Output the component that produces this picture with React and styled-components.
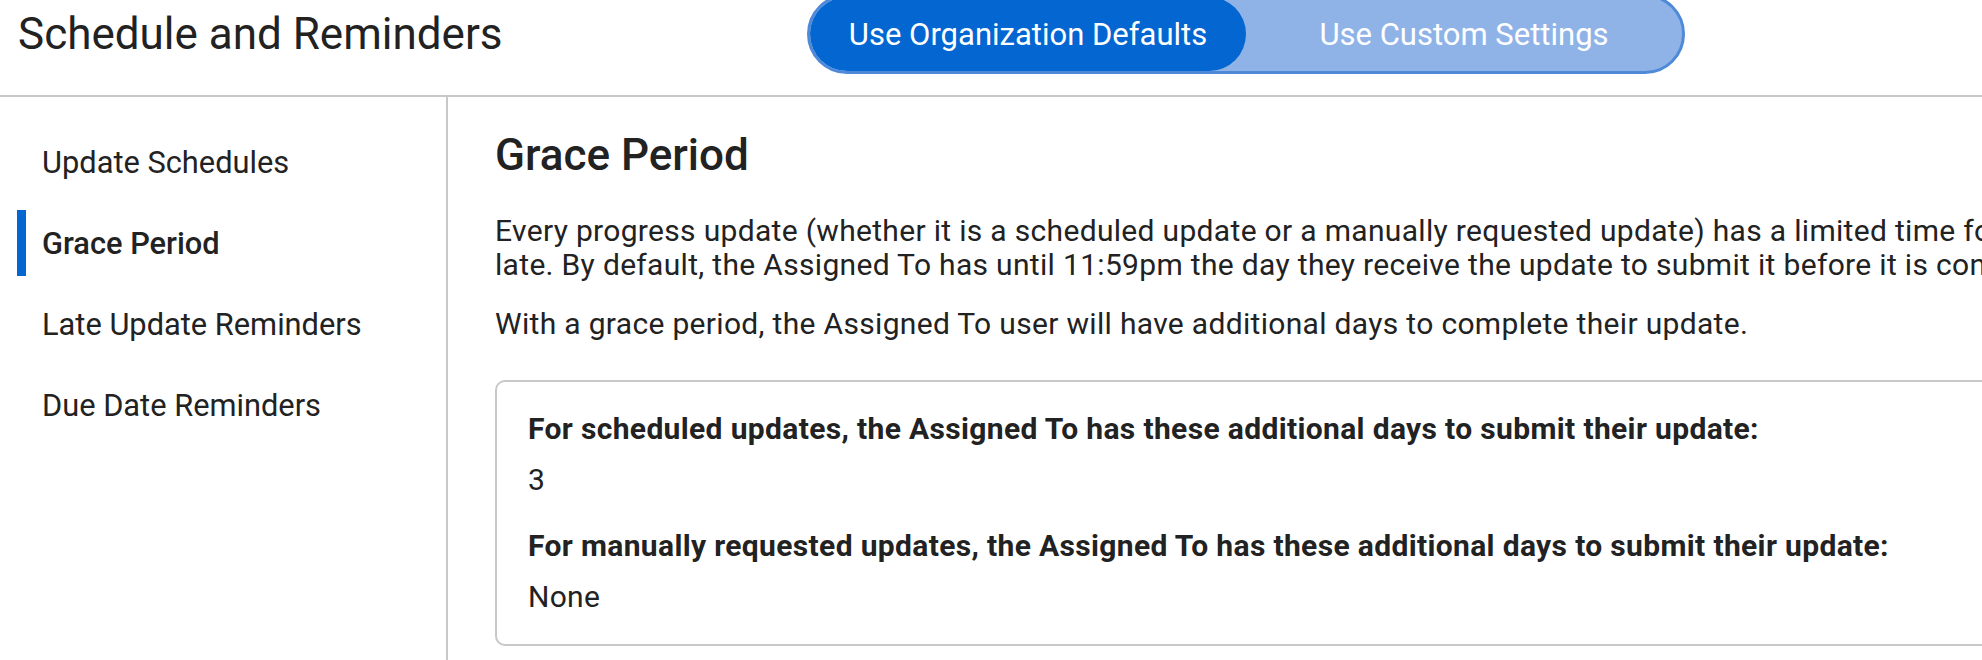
import React from "react";
import styled, {createGlobalStyle} from "styled-components";

const GlobalStyle = createGlobalStyle`
  html, body {
    margin: 0;
    padding: 0;
    background: #fff;
    overflow: hidden;
  }
  body {
    font-family: Roboto, "Liberation Sans", sans-serif;
    color: #222;
  }
`;

const Header = styled.header`
  display: flex;
  align-items: center;
  height: 64px;
  padding: 2px 0 29px 18px;
  border-bottom: 2px solid #c8c8c8;
`;

const PageTitle = styled.h1`
  flex: 0 0 789px;
  margin: 0;
  font-size: 44px;
  font-weight: 400;
  color: #222;
  white-space: nowrap;
`;

const Toggle = styled.div`
  display: flex;
  flex: 0 0 872px;
  height: 74px;
  border: 3px solid #4f8ad9;
  border-radius: 40px;
  background: #8fb3e7;
  overflow: hidden;
`;

const ToggleOption = styled.button`
  flex: 1;
  border: none;
  border-radius: 40px;
  padding: 0;
  font-family: inherit;
  font-size: 31px;
  color: #fff;
  cursor: pointer;
  background: ${props => props.active ? "#0366d1" : "transparent"};
`;

const Body = styled.div`
  display: flex;
  align-items: stretch;
  height: 564px;
`;

const Sidebar = styled.nav`
  flex: 0 0 446px;
  border-right: 2px solid #c8c8c8;
  padding-top: 32px;
`;

const NavItem = styled.div`
  display: flex;
  align-items: center;
  height: 66px;
  margin: 0 0 15px 17px;
  padding-left: 16px;
  border-left: 9px solid ${props => props.active ? "#0366d1" : "transparent"};
  font-size: 30.8px;
  font-weight: ${props => props.active ? 500 : 400};
  color: #222;
`;

const Main = styled.main`
  flex: 0 0 2150px;
  padding: 32px 0 0 47px;
`;

const SectionTitle = styled.h2`
  margin: 0 0 33px;
  font-size: 44px;
  font-weight: 500;
  color: #222;
`;

const Paragraph = styled.p`
  margin: 0 0 25px;
  font-size: 30px;
  line-height: 34px;
  letter-spacing: 0.32px;
`;

const Card = styled.div`
  margin-top: 39px;
  padding: 30px 31px 30px;
  border: 2px solid #c8c8c8;
  border-radius: 10px;
  display: flex;
  flex-direction: column;
  gap: 32px;
`;

const Field = styled.div`
  display: flex;
  flex-direction: column;
  gap: 17px;
`;

const FieldLabel = styled.div`
  font-size: 30px;
  line-height: 34px;
  font-weight: 700;
  letter-spacing: 0.35px;
`;

const FieldValue = styled.div`
  font-size: 30px;
  line-height: 34px;
  letter-spacing: 0.3px;
`;

const navItems = ["Update Schedules", "Grace Period", "Late Update Reminders", "Due Date Reminders"];

const fields = [
    {label: "For scheduled updates, the Assigned To has these additional days to submit their update:", value: "3"},
    {label: "For manually requested updates, the Assigned To has these additional days to submit their update:", value: "None"},
];

const App = () => (
    <>
        <GlobalStyle/>
        <Header>
            <PageTitle>Schedule and Reminders</PageTitle>
            <Toggle>
                <ToggleOption active>Use Organization Defaults</ToggleOption>
                <ToggleOption>Use Custom Settings</ToggleOption>
            </Toggle>
        </Header>
        <Body>
            <Sidebar>
                {navItems.map(item => (
                    <NavItem key={item} active={item === "Grace Period"}>{item}</NavItem>
                ))}
            </Sidebar>
            <Main>
                <SectionTitle>Grace Period</SectionTitle>
                <Paragraph>
                    Every progress update (whether it is a scheduled update or a manually requested update) has a limited time for submission before it is considered<br/>
                    late. By default, the Assigned To has until 11:59pm the day they receive the update to submit it before it is considered late.
                </Paragraph>
                <Paragraph>
                    With a grace period, the Assigned To user will have additional days to complete their update.
                </Paragraph>
                <Card>
                    {fields.map(field => (
                        <Field key={field.label}>
                            <FieldLabel>{field.label}</FieldLabel>
                            <FieldValue>{field.value}</FieldValue>
                        </Field>
                    ))}
                </Card>
            </Main>
        </Body>
    </>
);

export default App;
